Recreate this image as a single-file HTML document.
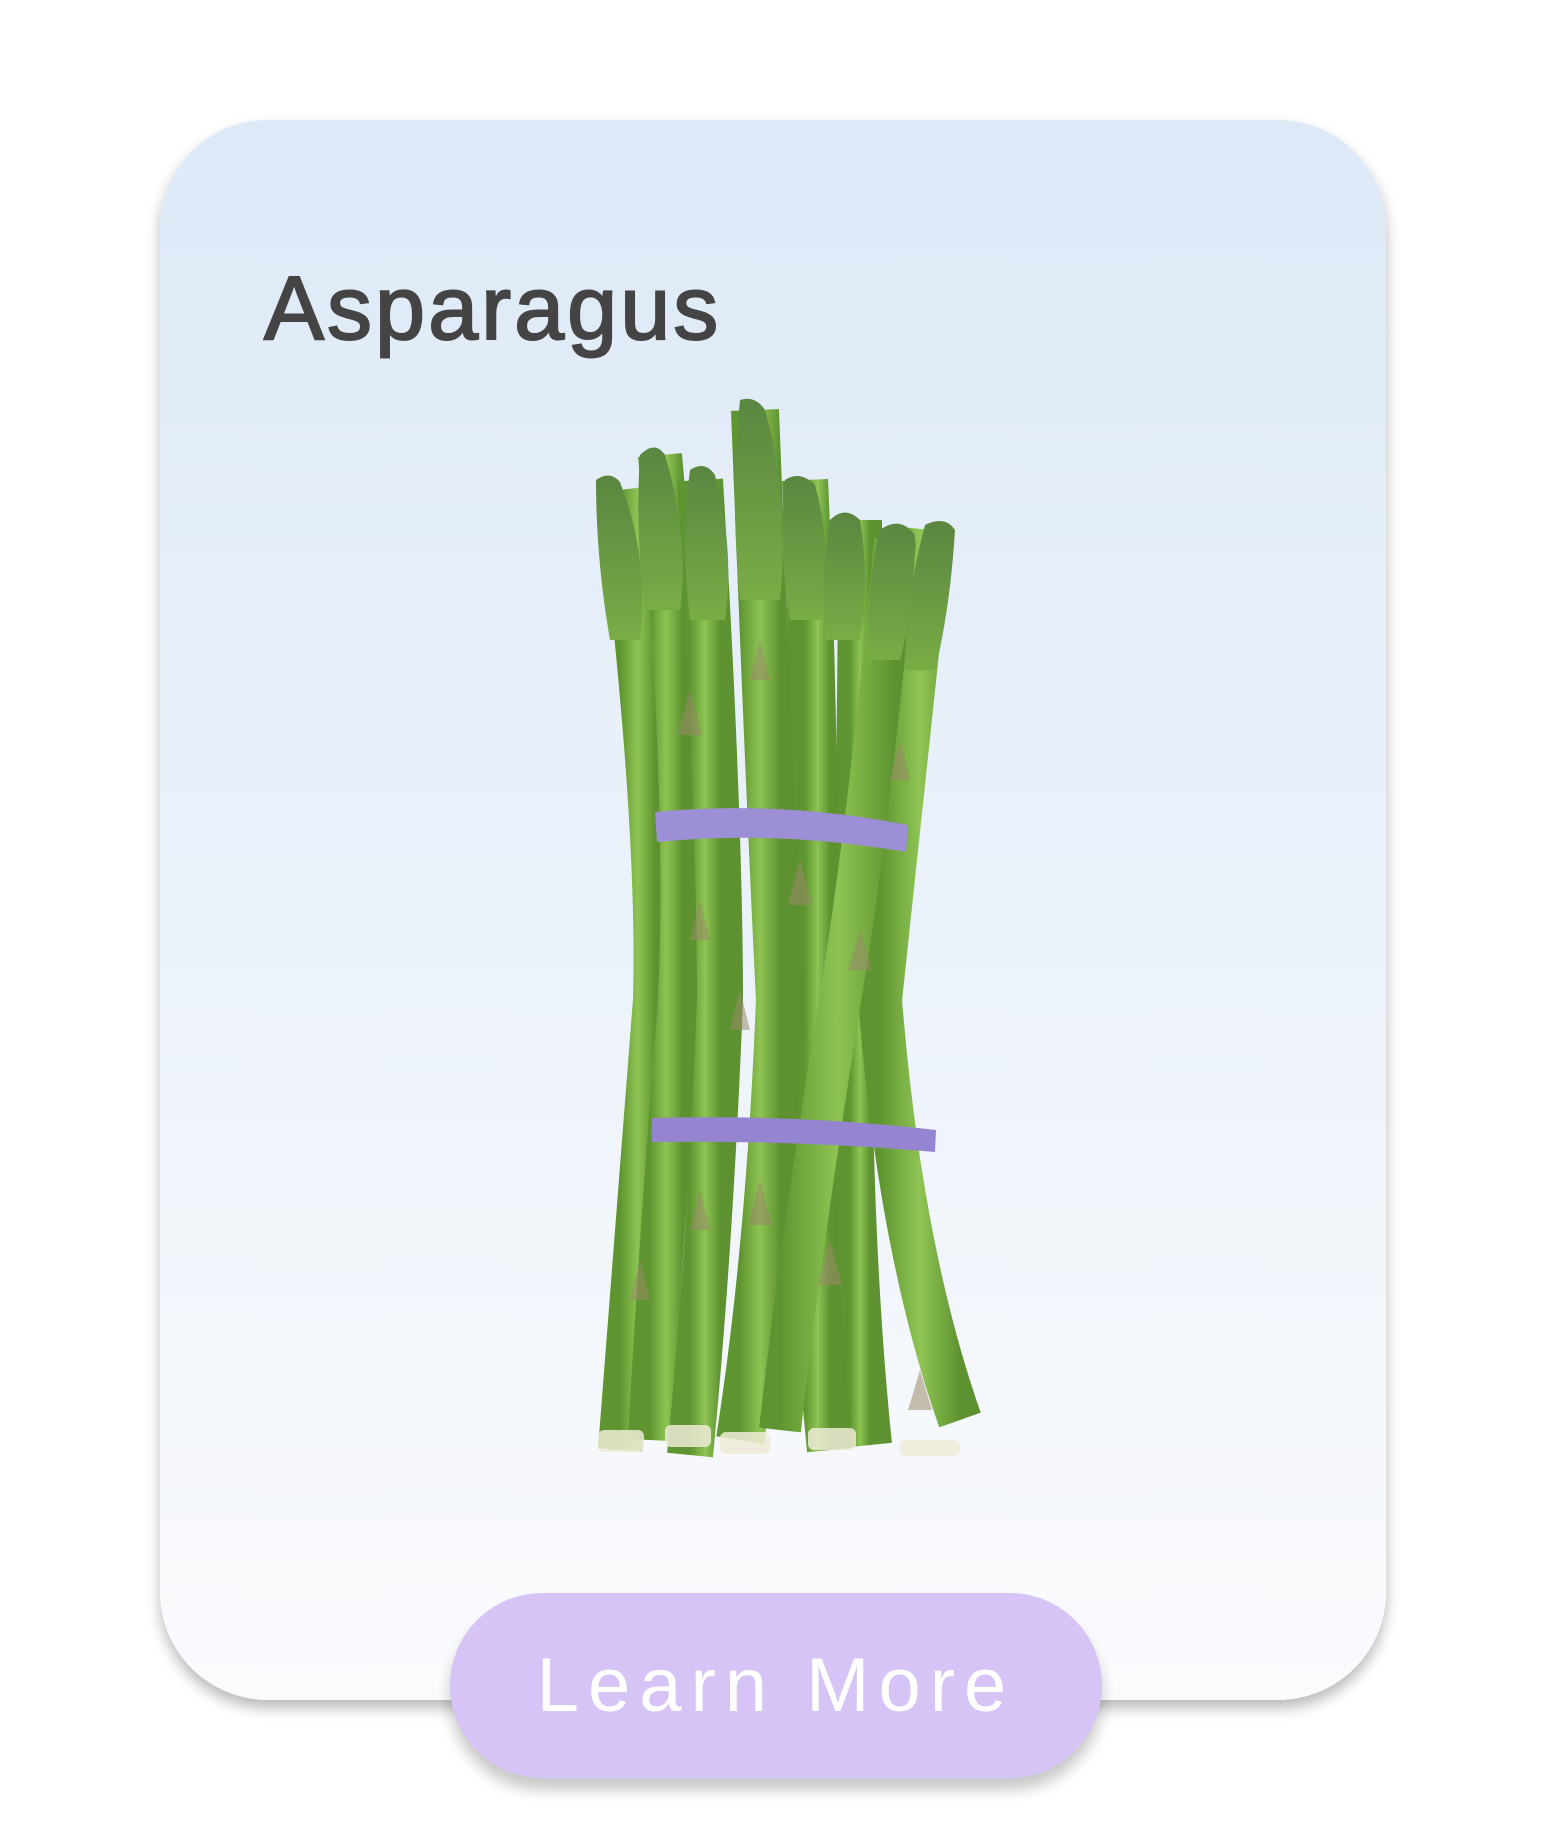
<!DOCTYPE html>
<html><head><meta charset="utf-8"><style>
html,body{margin:0;padding:0;background:#fff;width:1552px;height:1824px;overflow:hidden;font-family:"Liberation Sans","DejaVu Sans",sans-serif}
.card{position:absolute;left:160px;top:120px;width:1226px;height:1580px;border-radius:108px;background:linear-gradient(#dde9f7,#fafbfd);box-shadow:0 8px 14px rgba(0,0,0,0.28)}
h1{position:absolute;left:264px;top:264px;margin:0;font-size:90px;font-weight:normal;color:#444;letter-spacing:3px;line-height:1;-webkit-text-stroke:2px #444}
.btn{position:absolute;left:450px;top:1593px;width:652px;height:185px;border-radius:93px;background:#d5c4f5;color:#fff;font-size:76px;letter-spacing:9px;text-align:center;line-height:185px;box-shadow:0 12px 14px rgba(0,0,0,0.22)}
svg{position:absolute;left:0;top:0}
</style></head><body>
<div class="card"></div>
<h1>Asparagus</h1>
<svg width="1552" height="1824" viewBox="0 0 1552 1824">
<defs>
<linearGradient id="g" x1="0" x2="1"><stop offset="0" stop-color="#5f9530"/><stop offset=".5" stop-color="#8fc454"/><stop offset="1" stop-color="#5e9230"/></linearGradient>
<linearGradient id="t" x1="0" y1="0" x2="0" y2="1"><stop offset="0" stop-color="#5a8640"/><stop offset="1" stop-color="#7aac46"/></linearGradient>
</defs>
<g stroke-linecap="butt" fill="none">
<path d="M620 490 Q660 820 655 1000 Q640 1200 620 1450" stroke="url(#g)" stroke-width="44"/>
<path d="M660 455 Q690 800 680 1000 Q660 1250 650 1440" stroke="url(#g)" stroke-width="44"/>
<path d="M700 480 Q720 820 720 1000 Q710 1250 690 1455" stroke="url(#g)" stroke-width="46"/>
<path d="M860 520 Q860 820 850 1000 Q850 1250 870 1445" stroke="url(#g)" stroke-width="44"/>
<path d="M930 530 Q900 820 880 1000 Q900 1250 960 1420" stroke="url(#g)" stroke-width="44"/>
<path d="M805 480 Q820 820 810 1000 Q810 1250 830 1450" stroke="url(#g)" stroke-width="46"/>
<path d="M755 410 Q770 800 780 1000 Q770 1250 740 1440" stroke="url(#g)" stroke-width="48"/>
<path d="M895 540 Q870 820 840 1000 Q800 1250 780 1430" stroke="url(#g)" stroke-width="42"/>
</g>
<g fill="url(#t)">
<path d="M596 480 Q610 470 620 482 Q650 560 640 640 L610 640 Q596 560 596 480Z"/>
<path d="M640 455 Q655 440 665 455 Q690 540 680 610 L645 610 Q635 530 640 455Z"/>
<path d="M690 470 Q705 460 715 475 Q735 550 725 620 L690 620 Q680 540 690 470Z"/>
<path d="M740 400 Q755 395 765 410 Q790 500 780 600 L740 600 Q730 500 740 400Z"/>
<path d="M785 480 Q800 470 815 485 Q835 560 820 620 L790 620 Q778 550 785 480Z"/>
<path d="M830 520 Q845 505 860 520 Q870 580 860 640 L825 640 Q820 580 830 520Z"/>
<path d="M880 530 Q900 515 915 535 Q915 600 900 660 L870 660 Q865 590 880 530Z"/>
<path d="M925 525 Q945 515 955 530 Q950 610 935 670 L905 670 Q905 600 925 525Z"/>
</g>
<g fill="#9a8a6a" opacity=".55">
<path d="M690 690 l12 45 h-24z"/><path d="M760 640 l10 40 h-20z"/><path d="M700 900 l10 40 h-20z"/>
<path d="M800 860 l12 45 h-24z"/><path d="M860 930 l12 40 h-24z"/><path d="M740 990 l10 40 h-20z"/>
<path d="M900 740 l10 40 h-20z"/><path d="M760 1180 l12 45 h-24z"/><path d="M830 1240 l12 45 h-24z"/>
<path d="M700 1190 l10 40 h-20z"/><path d="M920 1370 l12 40 h-24z"/><path d="M640 1260 l10 40 h-20z"/>
</g>
<g fill="#eeebd6" opacity=".85">
<rect x="598" y="1430" width="46" height="22" rx="6"/><rect x="665" y="1425" width="46" height="22" rx="6"/>
<rect x="720" y="1432" width="50" height="22" rx="6"/><rect x="808" y="1428" width="48" height="22" rx="6"/>
<rect x="900" y="1440" width="60" height="16" rx="6"/>
</g>
<path d="M655 812 Q780 800 908 825 L906 852 Q780 830 657 842Z" fill="#9d8fd6"/>
<path d="M652 1118 Q800 1114 936 1130 L935 1152 Q800 1140 652 1142Z" fill="#9585d0"/>
</svg>
<div class="btn">Learn More</div>
</body></html>
